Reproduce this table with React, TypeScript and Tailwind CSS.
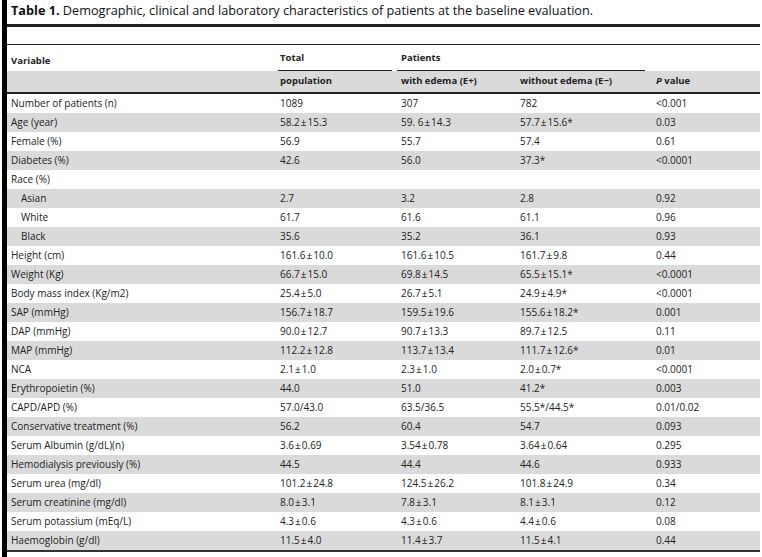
const rows: [string, string, string, string, string, boolean?][] = [
  ["Number of patients (n)", "1089", "307", "782", "<0.001"],
  ["Age (year)", "58.2±15.3", "59. 6±14.3", "57.7±15.6*", "0.03"],
  ["Female (%)", "56.9", "55.7", "57.4", "0.61"],
  ["Diabetes (%)", "42.6", "56.0", "37.3*", "<0.0001"],
  ["Race (%)", "", "", "", ""],
  ["Asian", "2.7", "3.2", "2.8", "0.92", true],
  ["White", "61.7", "61.6", "61.1", "0.96", true],
  ["Black", "35.6", "35.2", "36.1", "0.93", true],
  ["Height (cm)", "161.6±10.0", "161.6±10.5", "161.7±9.8", "0.44"],
  ["Weight (Kg)", "66.7±15.0", "69.8±14.5", "65.5±15.1*", "<0.0001"],
  ["Body mass index (Kg/m2)", "25.4±5.0", "26.7±5.1", "24.9±4.9*", "<0.0001"],
  ["SAP (mmHg)", "156.7±18.7", "159.5±19.6", "155.6±18.2*", "0.001"],
  ["DAP (mmHg)", "90.0±12.7", "90.7±13.3", "89.7±12.5", "0.11"],
  ["MAP (mmHg)", "112.2±12.8", "113.7±13.4", "111.7±12.6*", "0.01"],
  ["NCA", "2.1±1.0", "2.3±1.0", "2.0±0.7*", "<0.0001"],
  ["Erythropoietin (%)", "44.0", "51.0", "41.2*", "0.003"],
  ["CAPD/APD (%)", "57.0/43.0", "63.5/36.5", "55.5*/44.5*", "0.01/0.02"],
  ["Conservative treatment (%)", "56.2", "60.4", "54.7", "0.093"],
  ["Serum Albumin (g/dL)(n)", "3.6±0.69", "3.54±0.78", "3.64±0.64", "0.295"],
  ["Hemodialysis previously (%)", "44.5", "44.4", "44.6", "0.933"],
  ["Serum urea (mg/dl)", "101.2±24.8", "124.5±26.2", "101.8±24.9", "0.34"],
  ["Serum creatinine (mg/dl)", "8.0±3.1", "7.8±3.1", "8.1±3.1", "0.12"],
  ["Serum potassium (mEq/L)", "4.3±0.6", "4.3±0.6", "4.4±0.6", "0.08"],
  ["Haemoglobin (g/dl)", "11.5±4.0", "11.4±3.7", "11.5±4.1", "0.44"],
];

const cols = "grid grid-cols-[271px_119px_119px_133px_1fr]";

// the ± sign sits a little wider in the source table
const Val = ({ v }: { v: string }) => {
  const parts = v.split("±");
  if (parts.length === 1) return <>{v}</>;
  return (
    <>
      {parts[0]}
      <span className="px-[1px]">±</span>
      {parts[1]}
    </>
  );
};

const App = () => {
  return (
    <div className="w-[762px] h-[557px] bg-white flex font-['Open_Sans',sans-serif] text-[#222]">
      {/* left rule */}
      <div className="ml-[2px] w-[5px] bg-black" />

      <div className="flex-1 pr-[2px]">
        {/* Caption */}
        <div className="h-[24px] pt-[2px] pl-[4px] text-[12.7px] leading-[17px] text-[#111]">
          <span className="font-bold">Table 1.</span> Demographic, clinical and laboratory
          characteristics of patients at the baseline evaluation.
        </div>
        <div className="h-[3px] bg-[#222]" />
        <div className="h-[17px]" />
        <div className="h-px bg-[#222]" />

        {/* Header */}
        <div className={`${cols} text-[9.5px] font-bold`}>
          <div className="h-[26px] pl-[4px] flex items-end pb-[3px]">Variable</div>
          <div className="h-[26px] pl-[2px] mr-[5px] flex items-end pb-[5px] border-b border-[#222]">
            Total
          </div>
          <div className="col-span-2 h-[26px] pl-[4px] mr-[4px] flex items-end pb-[5px] border-b border-[#222]">
            Patients
          </div>
          <div />
        </div>
        <div className={`${cols} h-[21px] items-center bg-[#dadada] text-[9.5px] font-bold`}>
          <div />
          <div className="pl-[2px]">population</div>
          <div className="pl-[4px]">with edema (E+)</div>
          <div className="pl-[4px]">without edema (E−)</div>
          <div className="pl-[7px]">
            <span className="italic">P</span> value
          </div>
        </div>
        <div className="h-[2px] bg-[#222]" />

        {/* Body */}
        {rows.map(([label, total, withE, withoutE, p, indent], i) => (
          <div
            key={label}
            className={`${cols} h-[19px] items-center text-[10px] ${
              i % 2 === 1 ? "bg-[#dadada]" : ""
            }`}
          >
            <div className={indent ? "pl-[14px]" : "pl-[4px]"}>{label}</div>
            <div className="pl-[2px]"><Val v={total} /></div>
            <div className="pl-[4px]"><Val v={withE} /></div>
            <div className="pl-[4px]"><Val v={withoutE} /></div>
            <div className="pl-[7px]">{p}</div>
          </div>
        ))}
        <div className="h-[2px] bg-[#333]" />
      </div>
    </div>
  );
};

export default App;
